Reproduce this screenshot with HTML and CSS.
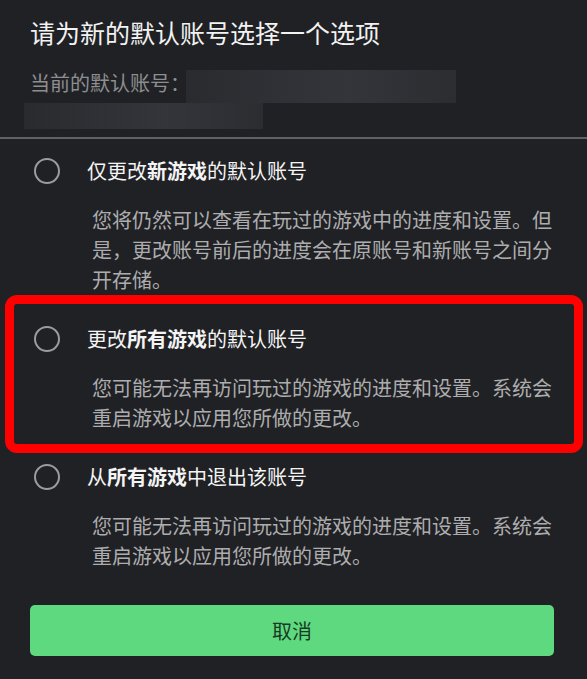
FILE: index.html
```html
<!DOCTYPE html>
<html lang="zh-CN">

<head>
    <meta charset="UTF-8">
    <meta name="viewport" content="width=device-width, initial-scale=1.0">
    <title>选择默认账号</title>
    <link rel="stylesheet" href="styles.css">
</head>

<body>
    <header class="dialog-header">
        <h1>请为新的默认账号选择一个选项</h1>
        <div class="current-row">
            <span class="current-label">当前的默认账号：</span>
            <span class="masked masked-long"></span>
        </div>
        <div class="masked masked-short"></div>
    </header>
    <div class="divider"></div>

    <div class="option option-first">
        <span class="radio"></span>
        <div class="option-title">仅更改<b>新游戏</b>的默认账号</div>
        <p class="option-desc">您将仍然可以查看在玩过的游戏中的进度和设置。但是，更改账号前后的进度会在原账号和新账号之间分开存储。</p>
    </div>

    <div class="highlight">
        <div class="option">
            <span class="radio"></span>
            <div class="option-title">更改<b>所有游戏</b>的默认账号</div>
            <p class="option-desc">您可能无法再访问玩过的游戏的进度和设置。系统会重启游戏以应用您所做的更改。</p>
        </div>
    </div>

    <div class="option option-last">
        <span class="radio"></span>
        <div class="option-title">从<b>所有游戏</b>中退出该账号</div>
        <p class="option-desc">您可能无法再访问玩过的游戏的进度和设置。系统会重启游戏以应用您所做的更改。</p>
    </div>

    <button class="cancel-btn" type="button">取消</button>
</body>

</html>
```

FILE: styles.css
```css
body {
    background-color: #202124;
    font-family: "Noto Sans CJK SC", "Noto Sans", sans-serif;
    margin: 0;
    padding: 0;
    color: #f2f2f2;
}

.dialog-header {
    padding: 17px 30px 0 30px;
}

.dialog-header h1 {
    margin: 0;
    font-size: 25px;
    font-weight: 400;
    line-height: 30px;
    color: #f2f2f2;
}

.current-row {
    display: flex;
    align-items: flex-start;
    gap: 0;
    margin-top: 23px;
}

.current-label {
    font-size: 20px;
    line-height: 26px;
    color: #8d8e91;
}

.masked {
    display: block;
    background: linear-gradient(90deg, #2a2b2f, #34353a 60%, #2c2d31);
}

.masked-long {
    width: 270px;
    height: 33px;
    margin-left: -4px;
}

.masked-short {
    width: 239px;
    height: 26px;
    margin-left: -6px;
}

.divider {
    height: 2px;
    margin-top: 8px;
    background-color: #606164;
}

.option {
    display: grid;
    grid-template-columns: 26px 1fr;
    column-gap: 27px;
    row-gap: 19px;
    align-items: center;
    padding: 29px 0 0 34px;
}

.option-first {
    padding-top: 17px;
}

.option-last {
    padding-top: 9px;
}

.radio {
    width: 26px;
    height: 26px;
    box-sizing: border-box;
    border: 2.5px solid #9c9c9c;
    border-radius: 50%;
}

.option-title {
    font-size: 20px;
    line-height: 30px;
    color: #f4f4f4;
}

.option-title b {
    font-weight: 700;
}

.option-desc {
    grid-column: 2;
    margin: 0;
    padding-left: 5px;
    width: 470px;
    font-size: 20px;
    line-height: 30px;
    color: #adadaf;
}

.highlight {
    margin: 0 4px 0 5px;
    border: 9px solid #ff0000;
    border-radius: 12px;
}

.highlight .option {
    padding: 20px 0 11px 20px;
}

.cancel-btn {
    display: block;
    width: 524px;
    height: 51px;
    margin: 34px 0 0 30px;
    padding: 0;
    background-color: #5ed97f;
    border: none;
    border-radius: 5px;
    color: #183b23;
    font-family: "Noto Sans CJK SC", "Noto Sans", sans-serif;
    font-size: 20px;
    cursor: pointer;
}
```
